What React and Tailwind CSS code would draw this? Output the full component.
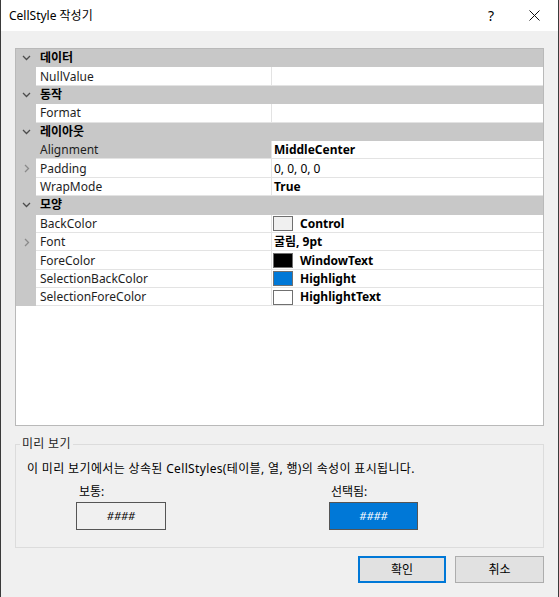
const FONT = "font-['Noto_Sans','Noto_Sans_CJK_KR',sans-serif]";

const Chevron = ({ open }) =>
  open ? (
    <svg width="9" height="6" viewBox="0 0 9 6" className="block">
      <polyline points="1,1 4.5,4.5 8,1" fill="none" stroke="#4d4d4d" strokeWidth="1.3" />
    </svg>
  ) : (
    <svg width="6" height="9" viewBox="0 0 6 9" className="block">
      <polyline points="1,1 4.5,4.5 1,8" fill="none" stroke="#8a8a8a" strokeWidth="1.3" />
    </svg>
  );

const Category = ({ label }) => (
  <div className="flex h-[18.4px] items-center bg-[#c8c8c8]">
    <div className="flex w-[20px] justify-center pl-[1px]">
      <Chevron open />
    </div>
    <div className="pl-[4px] text-[12px] font-bold text-black">{label}</div>
  </div>
);

const Swatch = ({ color }) => (
  <span className={`mr-[7px] inline-block h-[15px] w-[20px] border border-[#707070] ${color}`} />
);

const Prop = ({ name, value, bold, swatch, expand, selected }) => (
  <div className="flex h-[18.4px]">
    <div className="flex w-[20px] items-center justify-center bg-[#c8c8c8] pl-[2px]">
      {expand && <Chevron />}
    </div>
    <div
      className={`flex w-[235px] items-center border-b border-[#e3e3e3] pl-[4px] pt-[1px] text-[12px] text-[#1e1e1e] ${
        selected ? "bg-[#c8c8c8] border-[#c8c8c8]" : "bg-white"
      }`}
    >
      {name}
    </div>
    <div className="w-px bg-[#e3e3e3]" />
    <div
      className={`flex flex-1 items-center border-b border-[#e3e3e3] bg-white pl-[1px] pt-[1px] text-[12px] text-black ${
        bold ? "font-bold" : ""
      }`}
    >
      {swatch && <Swatch color={swatch} />}
      {!swatch && <span className="w-px" />}
      {value}
    </div>
  </div>
);

export default function App() {
  return (
    <div className={`${FONT} flex h-[597px] w-[559px] flex-col border-x border-[#3a3a3a] bg-[#f0f0f0]`}>
      <div className="flex h-[31px] items-center bg-white pl-[8px]">
        <span className="text-[12px] text-black">CellStyle 작성기</span>
        <span className="ml-auto mr-[35px] text-[14px] text-black">?</span>
        <svg width="11" height="11" viewBox="0 0 11 11" className="mr-[18px]">
          <path d="M0.5 0.5 L10.5 10.5 M10.5 0.5 L0.5 10.5" stroke="#111" strokeWidth="1" />
        </svg>
      </div>

      <div className="flex flex-col px-[14px] pt-[17px]">
        <div className="flex h-[378px] flex-col border border-[#b9b9b9] bg-white">
          <Category label="데이터" />
          <Prop name="NullValue" value="" />
          <Category label="동작" />
          <Prop name="Format" value="" />
          <Category label="레이아웃" />
          <Prop name="Alignment" value="MiddleCenter" bold selected />
          <Prop name="Padding" value="0, 0, 0, 0" expand />
          <Prop name="WrapMode" value="True" bold />
          <Category label="모양" />
          <Prop name="BackColor" value="Control" bold swatch="bg-[#f0f0f0]" />
          <Prop name="Font" value="굴림, 9pt" bold expand />
          <Prop name="ForeColor" value="WindowText" bold swatch="bg-black" />
          <Prop name="SelectionBackColor" value="Highlight" bold swatch="bg-[#0078d7]" />
          <Prop name="SelectionForeColor" value="HighlightText" bold swatch="bg-white" />
        </div>

        <fieldset className="mt-[9px] h-[113px] border border-[#dcdcdc] px-0 pb-0">
          <legend className="ml-[4px] px-[2px] text-[12px] tracking-[0.3px] text-[#1e1e1e]">미리 보기</legend>
          <div className="mt-[7px] pl-[11px] text-[12px] tracking-[0.35px] text-black">
            이 미리 보기에서는 상속된 CellStyles(테이블, 열, 행)의 속성이 표시됩니다.
          </div>
          <div className="mt-[6px] flex">
            <div className="ml-[60px] flex flex-col">
              <span className="pl-[3px] text-[12px] leading-[16px] text-black">보통:</span>
              <div className="mt-[2px] flex h-[28px] w-[90px] items-center justify-center border border-[#555] bg-[#f0f0f0] text-[11px] italic text-black">
                ####
              </div>
            </div>
            <div className="ml-[163px] flex flex-col">
              <span className="pl-[2px] text-[12px] leading-[16px] text-black">선택됨:</span>
              <div className="mt-[2px] flex h-[28px] w-[89px] items-center justify-center border border-[#555] bg-[#0078d7] text-[11px] italic text-white">
                ####
              </div>
            </div>
          </div>
        </fieldset>

        <div className="mt-[8px] flex justify-end gap-[9px] pr-0">
          <button className="h-[27px] w-[88px] border-2 border-[#0078d7] bg-[#e1e1e1] text-[12px] text-black">
            확인
          </button>
          <button className="h-[27px] w-[89px] border border-[#adadad] bg-[#e1e1e1] text-[12px] text-black">
            취소
          </button>
        </div>
      </div>
    </div>
  );
}
